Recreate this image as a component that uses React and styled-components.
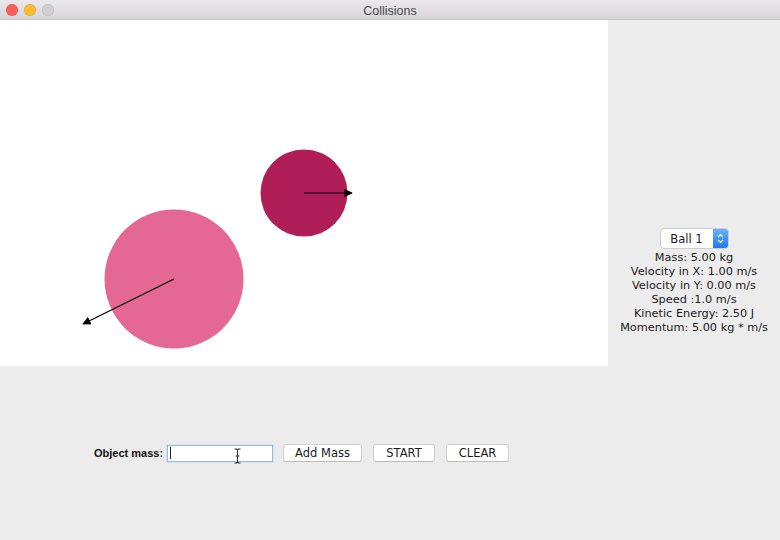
import React from "react";
import styled, { createGlobalStyle } from "styled-components";

const GlobalStyle = createGlobalStyle`
  html, body {
    margin: 0;
    padding: 0;
    background: #ececec;
  }
  body {
    font-family: "DejaVu Sans", "Liberation Sans", sans-serif;
  }
`;

const Window = styled.div`
  width: 780px;
  height: 540px;
  display: flex;
  flex-direction: column;
  background: #ececec;
  overflow: hidden;
`;

const TitleBar = styled.div`
  height: 20px;
  flex: none;
  position: relative;
  display: flex;
  align-items: center;
  justify-content: center;
  padding-top: 2px;
  background: linear-gradient(#ebe9eb, #d6d4d6);
  border-bottom: 1px solid #c4c2c4;
  box-sizing: border-box;
`;

const Lights = styled.div`
  position: absolute;
  left: 6px;
  top: 4px;
  display: flex;
  gap: 6px;
`;

const Light = styled.span`
  width: 12px;
  height: 12px;
  border-radius: 50%;
  background: ${({ color }) => color};
  box-shadow: inset 0 0 0 0.5px rgba(0, 0, 0, 0.12);
`;

const Title = styled.div`
  font-family: "Liberation Sans", Arial, sans-serif;
  font-size: 12.5px;
  color: #4b4b4b;
`;

const Body = styled.div`
  flex: 1;
  display: flex;
`;

const Main = styled.div`
  width: 608px;
  display: flex;
  flex-direction: column;
`;

const Canvas = styled.div`
  height: 346px;
  background: #ffffff;
`;

const Controls = styled.div`
  flex: 1;
  display: flex;
  align-items: center;
  padding-left: 94px;
  font-size: 11px;
  color: #111;
`;

const Label = styled.span`
  font-family: "Liberation Sans", Arial, sans-serif;
  font-weight: bold;
  font-size: 11px;
  width: 70px;
  margin-right: 3px;
  white-space: nowrap;
`;

const Input = styled.div`
  width: 104px;
  height: 15px;
  background: #fff;
  border: 1px solid #9dbbe3;
  box-shadow: 0 0 0 1px #d2e1f4;
  margin-right: 10px;
  position: relative;
  display: flex;
  align-items: center;
`;

const Caret = styled.span`
  width: 1px;
  height: 12px;
  background: #222;
  margin-left: 2px;
`;

const Beam = styled.svg`
  position: absolute;
  left: 66px;
  top: 2px;
`;

const Button = styled.button`
  height: 18px;
  width: ${({ w }) => w}px;
  margin: 0 ${({ gap }) => gap}px 0 0;
  padding: 0;
  background: #fff;
  border: 1px solid #d0d0d0;
  border-bottom-color: #bcbcbc;
  border-radius: 3px;
  font-family: "DejaVu Sans", sans-serif;
  font-size: 11.5px;
  color: #1a1a1a;
`;

const Side = styled.div`
  flex: 1;
  display: flex;
  flex-direction: column;
  align-items: center;
  justify-content: center;
  padding-top: 3px;
  font-size: 11.3px;
  color: #1a1a1a;
`;

const Select = styled.div`
  width: 69px;
  height: 21px;
  display: flex;
  background: #fff;
  border: 1px solid #cfcfcf;
  border-radius: 4px;
  box-sizing: border-box;
  overflow: hidden;
  margin-bottom: 2px;
`;

const SelectText = styled.div`
  flex: 1;
  display: flex;
  align-items: center;
  justify-content: center;
  font-size: 11.5px;
`;

const SelectArrow = styled.div`
  width: 15px;
  background: linear-gradient(#6ab1fb, #1f78f0);
  display: flex;
  align-items: center;
  justify-content: center;
`;

const Line = styled.div`
  line-height: 14px;
  white-space: nowrap;
`;

const stats = [
  "Mass: 5.00 kg",
  "Velocity in X: 1.00 m/s",
  "Velocity in Y: 0.00 m/s",
  "Speed :1.0 m/s",
  "Kinetic Energy: 2.50 J",
  "Momentum: 5.00 kg * m/s",
];

const balls = [
  { x: 174, y: 259, r: 69.5, color: "#e46893", vx: -91, vy: 45 },
  { x: 304, y: 173, r: 43.5, color: "#b01e57", vx: 48, vy: 0 },
];

const Scene = () => (
  <svg width="608" height="346">
    <defs>
      <marker
        id="head"
        viewBox="0 0 10 10"
        refX="9"
        refY="5"
        markerWidth="7"
        markerHeight="7"
        orient="auto"
      >
        <path d="M0 0 L10 5 L0 10 z" fill="#000" />
      </marker>
    </defs>
    {balls.map((b, i) => (
      <circle key={i} cx={b.x} cy={b.y} r={b.r} fill={b.color} />
    ))}
    {balls.map((b, i) => (
      <line
        key={"v" + i}
        x1={b.x}
        y1={b.y}
        x2={b.x + b.vx}
        y2={b.y + b.vy}
        stroke="#000"
        strokeWidth="1.2"
        markerEnd="url(#head)"
      />
    ))}
  </svg>
);

const App = () => {
  return (
    <Window>
      <GlobalStyle />
      <TitleBar>
        <Lights>
          <Light color="#fc5f57" />
          <Light color="#fdbc2e" />
          <Light color="#d0d0d0" />
        </Lights>
        <Title>Collisions</Title>
      </TitleBar>
      <Body>
        <Main>
          <Canvas>
            <Scene />
          </Canvas>
          <Controls>
            <Label>Object mass:</Label>
            <Input>
              <Caret />
              <Beam width="7" height="16" viewBox="0 0 7 16">
                <path
                  d="M0.5 1 H2.5 L3.5 2 L4.5 1 H6.5 M3.5 2 V14 M0.5 15 H2.5 L3.5 14 L4.5 15 H6.5 M1.5 8 H5.5"
                  stroke="#333"
                  strokeWidth="1.1"
                  fill="none"
                />
              </Beam>
            </Input>
            <Button w={79} gap={11}>Add Mass</Button>
            <Button w={62} gap={11}>START</Button>
            <Button w={63} gap={0}>CLEAR</Button>
          </Controls>
        </Main>
        <Side>
          <Select>
            <SelectText>Ball 1</SelectText>
            <SelectArrow>
              <svg width="7" height="11" viewBox="0 0 7 11">
                <path
                  d="M1 4 L3.5 1.5 L6 4 M1 7 L3.5 9.5 L6 7"
                  stroke="#fff"
                  strokeWidth="1.2"
                  fill="none"
                />
              </svg>
            </SelectArrow>
          </Select>
          {stats.map((s) => (
            <Line key={s}>{s}</Line>
          ))}
        </Side>
      </Body>
    </Window>
  );
};

export default App;
